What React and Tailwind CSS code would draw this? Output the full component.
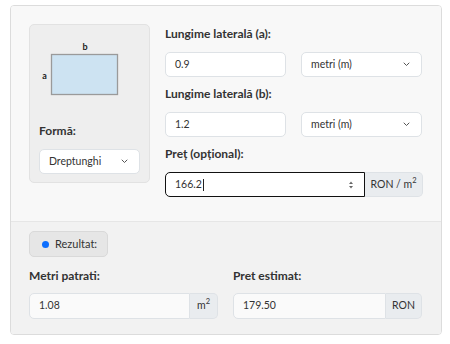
import { useState } from "react";

const Chevron = () => (
  <svg width="7" height="5" viewBox="0 0 7 5" className="shrink-0">
    <path d="M1 1l2.5 2.5L6 1" fill="none" stroke="#555" strokeWidth="1" strokeLinecap="round" strokeLinejoin="round" />
  </svg>
);

const SelectBox = ({ value, className }) => (
  <div className={`flex items-center justify-between bg-white border border-[#dee2e6] rounded-[5px] h-[25px] pl-[9px] pr-[11px] text-[10.5px] text-[#333] ${className}`}>
    <span>{value}</span>
    <Chevron />
  </div>
);

const Field = ({ value }) => (
  <div className="flex items-center bg-white border border-[#dee2e6] rounded-[5px] h-[25px] px-[9px] text-[10.5px] text-[#333] w-[121px]">
    {value}
  </div>
);

export default function App() {
  const [price] = useState("166.2");

  return (
    <div className="w-[450px] h-[344px] bg-white pt-[5px] pl-[10px]" style={{ fontFamily: 'Lato, sans-serif' }}>
      <div className="w-[432px] h-[330px] border border-[#dcdcdc] rounded-[4px] overflow-hidden flex flex-col">
        <div className="bg-[#f8f8f8] flex pt-[18px] pl-[18px] h-[216px] border-b border-[#e6e6e6]">
          <div className="w-[121px] h-[159px] bg-[#eeeeee] border border-[#e2e2e2] rounded-[5px] flex flex-col pl-[9px] pt-[15px]">
            <svg width="90" height="60" viewBox="0 0 90 60" className="ml-[2px]">
              <text x="44" y="10" fontSize="9" fontWeight="bold" fill="#222" textAnchor="middle" fontFamily="Lato, sans-serif">b</text>
              <text x="3.5" y="39" fontSize="9" fontWeight="bold" fill="#222" textAnchor="middle" fontFamily="Lato, sans-serif">a</text>
              <rect x="10.5" y="14.5" width="66" height="40" fill="#cde3f2" stroke="#9a9a9a" strokeWidth="1.3" />
            </svg>
            <div className="mt-[22px] text-[12px] font-bold text-[#333]">Formă:</div>
            <SelectBox value="Dreptunghi" className="w-[101px] mt-[9px]" />
          </div>
          <div className="ml-[15px] w-[258px] flex flex-col">
            <div className="text-[12px] font-bold text-[#333] leading-[20px]">Lungime laterală (a):</div>
            <div className="flex gap-[15px] mt-[8px]">
              <Field value="0.9" />
              <SelectBox value="metri (m)" className="w-[121px]" />
            </div>
            <div className="text-[12px] font-bold text-[#333] leading-[20px] mt-[7px]">Lungime laterală (b):</div>
            <div className="flex gap-[15px] mt-[8px]">
              <Field value="1.2" />
              <SelectBox value="metri (m)" className="w-[121px]" />
            </div>
            <div className="text-[12px] font-bold text-[#333] leading-[20px] mt-[7px]">Preț (opțional):</div>
            <div className="flex mt-[8px] h-[25px]">
              <div className="flex items-center justify-between w-[200px] bg-white border-[1.5px] border-[#111] rounded-l-[5px] pl-[9px] pr-[10px] text-[10.5px] text-[#333]">
                <span>
                  {price}
                  <span className="inline-block w-px h-[12px] bg-[#222] align-middle ml-px" />
                </span>
                <svg width="6" height="10" viewBox="0 0 6 10">
                  <path d="M3 1.5L5 4H1Z" fill="#666" />
                  <path d="M3 8.5L5 6H1Z" fill="#666" />
                </svg>
              </div>
              <div className="flex items-center justify-center w-[58px] bg-[#e9ecef] border border-l-0 border-[#dee2e6] rounded-r-[5px] text-[10.5px] text-[#333]">
                RON / m<sup className="text-[7.5px]">2</sup>
              </div>
            </div>
          </div>
        </div>
        <div className="bg-[#f2f2f2] flex-1 pl-[18px] pt-[9px]">
          <div className="flex items-center w-[79px] h-[26px] bg-[#e6e6e6] border border-[#d9d9d9] rounded-[5px] pl-[12px] text-[11px] text-[#333]">
            <span className="w-[7px] h-[7px] rounded-full bg-[#0d6efd] mr-[6px]" />
            Rezultat:
          </div>
          <div className="flex gap-[15px] mt-[9px]">
            <div className="w-[189px]">
              <div className="text-[12px] font-bold text-[#333] leading-[20px]">Metri patrati:</div>
              <div className="flex h-[26px] mt-[7px]">
                <div className="flex-1 flex items-center bg-[#fafafa] border border-[#dee2e6] rounded-l-[5px] px-[9px] text-[10.5px] text-[#333]">1.08</div>
                <div className="w-[28px] flex items-center justify-center bg-[#e9ecef] border border-l-0 border-[#dee2e6] rounded-r-[5px] text-[10.5px] text-[#333]">
                  m<sup className="text-[7.5px]">2</sup>
                </div>
              </div>
            </div>
            <div className="w-[189px]">
              <div className="text-[12px] font-bold text-[#333] leading-[20px]">Pret estimat:</div>
              <div className="flex h-[26px] mt-[7px]">
                <div className="flex-1 flex items-center bg-[#fafafa] border border-[#dee2e6] rounded-l-[5px] px-[9px] text-[10.5px] text-[#333]">179.50</div>
                <div className="w-[36px] flex items-center justify-center bg-[#e9ecef] border border-l-0 border-[#dee2e6] rounded-r-[5px] text-[10.5px] text-[#333]">RON</div>
              </div>
            </div>
          </div>
        </div>
      </div>
    </div>
  );
}
